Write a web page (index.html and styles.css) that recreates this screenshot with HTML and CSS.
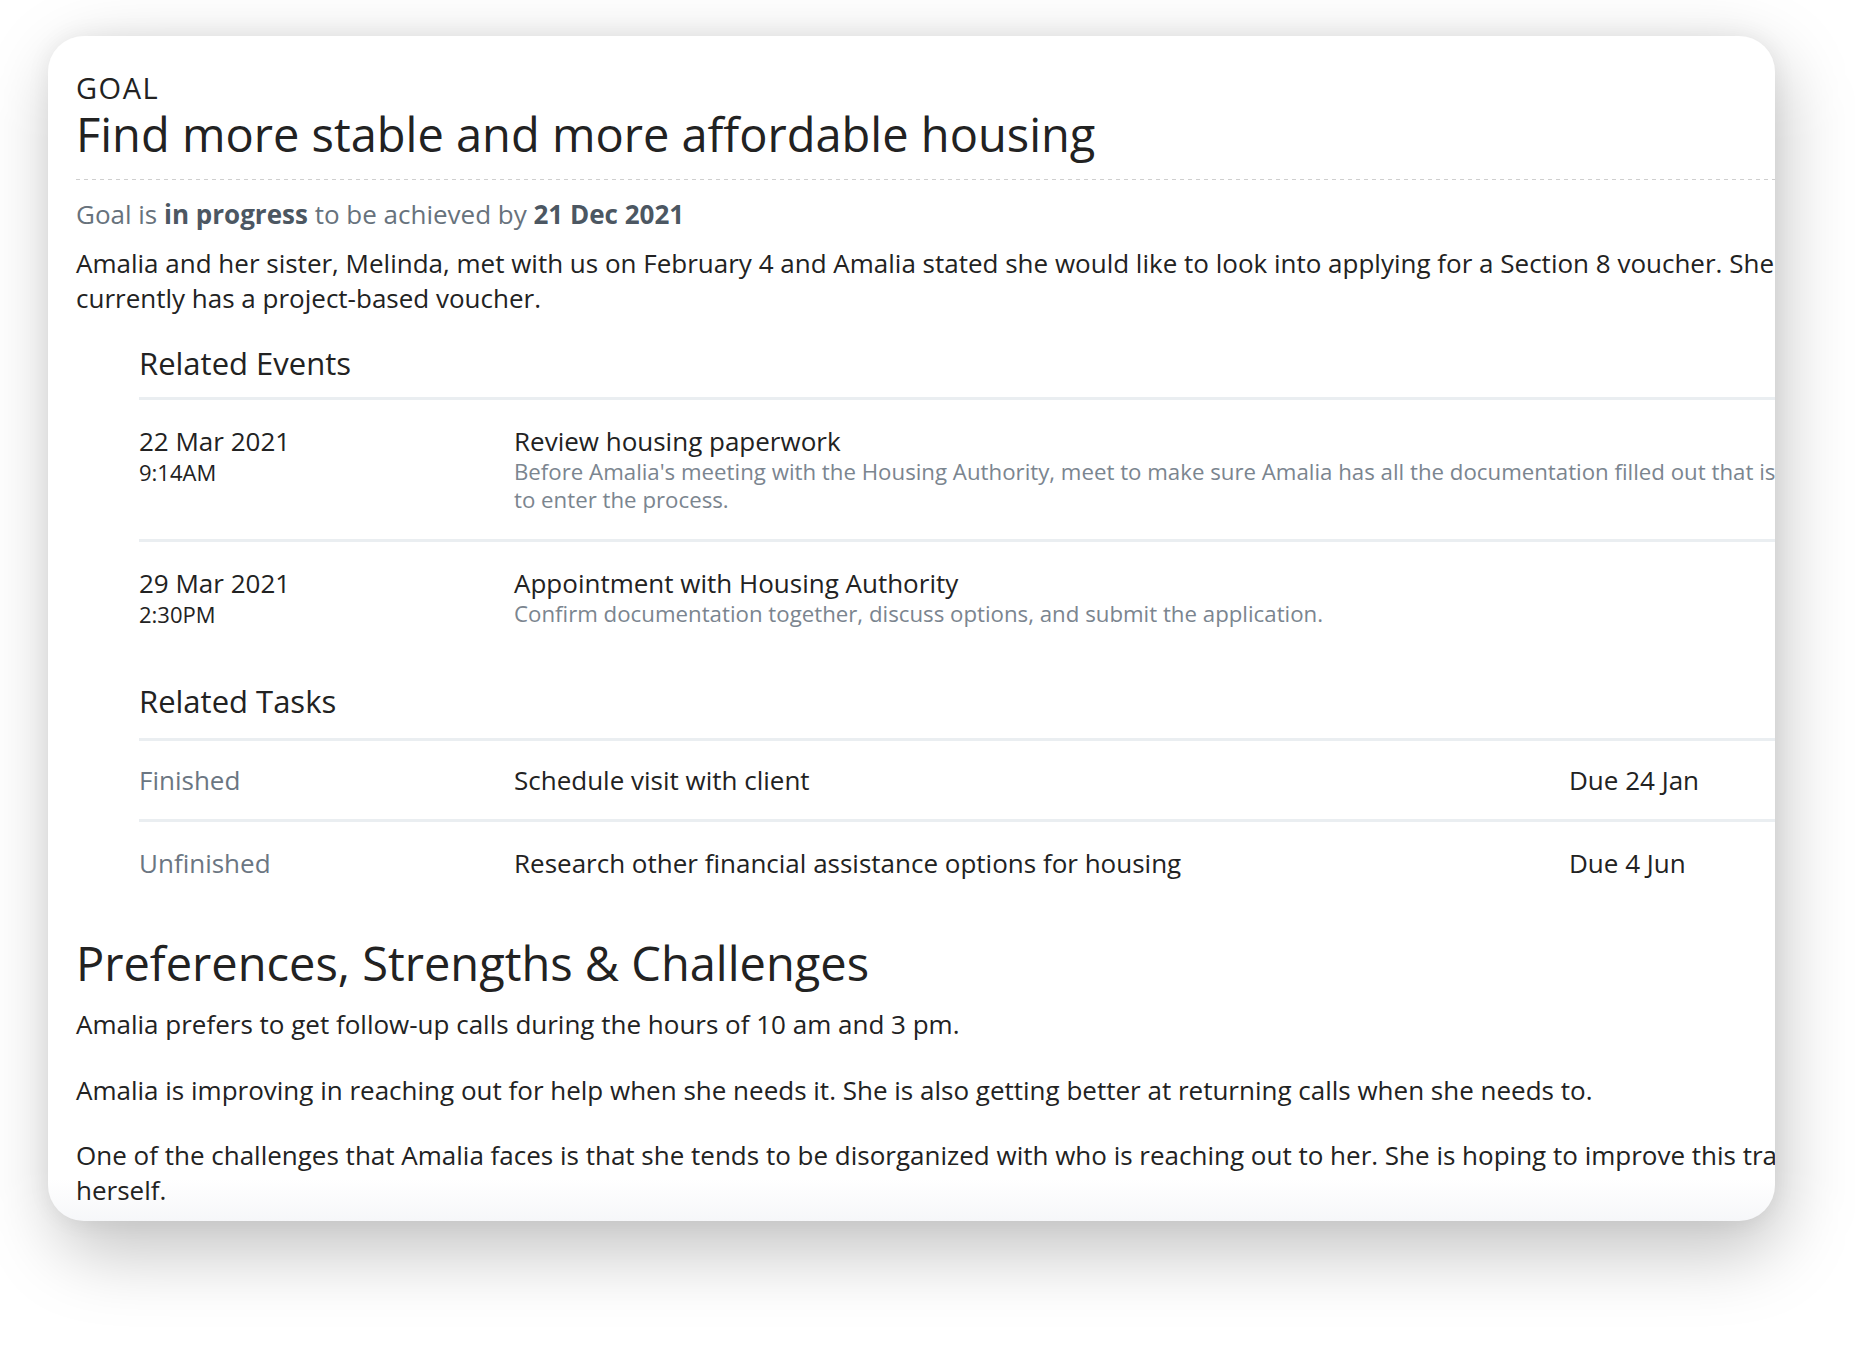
FILE: index.html
```html
<!DOCTYPE html>
<html lang="en">

<head>
    <meta charset="UTF-8">
    <title>Goal</title>
    <link rel="stylesheet" href="styles.css">
</head>

<body>
    <div class="stage">
        <div class="card">
            <div class="sheet">
                <div class="goal-label">GOAL</div>
                <h1 class="goal-title">Find more stable and more affordable housing</h1>
                <div class="rule"></div>
                <div class="goal-status">Goal is <b>in progress</b> to be achieved by <b>21 Dec 2021</b></div>
                <p class="goal-desc">Amalia and her sister, Melinda, met with us on February 4 and Amalia stated she would like to look into applying for a Section 8 voucher. She currently has a project-based voucher.</p>

                <div class="related">
                    <h2 class="related-title">Related Events</h2>
                    <div class="event-row">
                        <div class="when">
                            <div class="date">22 Mar 2021</div>
                            <div class="time">9:14AM</div>
                        </div>
                        <div class="what">
                            <div class="event-name">Review housing paperwork</div>
                            <div class="event-desc">Before Amalia's meeting with the Housing Authority, meet to make sure Amalia has all the documentation filled out that is needed<br>to enter the process.</div>
                        </div>
                    </div>
                    <div class="event-row">
                        <div class="when">
                            <div class="date">29 Mar 2021</div>
                            <div class="time">2:30PM</div>
                        </div>
                        <div class="what">
                            <div class="event-name">Appointment with Housing Authority</div>
                            <div class="event-desc">Confirm documentation together, discuss options, and submit the application.</div>
                        </div>
                    </div>
                </div>

                <div class="related related-tasks">
                    <h2 class="related-title">Related Tasks</h2>
                    <div class="task-row">
                        <div class="task-state">Finished</div>
                        <div class="task-name">Schedule visit with client</div>
                        <div class="task-due">Due 24 Jan</div>
                    </div>
                    <div class="task-row">
                        <div class="task-state">Unfinished</div>
                        <div class="task-name">Research other financial assistance options for housing</div>
                        <div class="task-due">Due 4 Jun</div>
                    </div>
                </div>

                <h2 class="section-title">Preferences, Strengths &amp; Challenges</h2>
                <p class="note">Amalia prefers to get follow-up calls during the hours of 10 am and 3 pm.</p>
                <p class="note">Amalia is improving in reaching out for help when she needs it. She is also getting better at returning calls when she needs to.</p>
                <p class="note">One of the challenges that Amalia faces is that she tends to be disorganized with who is reaching out to her. She is hoping to improve this trait for herself.</p>
            </div>
        </div>
    </div>
</body>

</html>
```

FILE: styles.css
```css
html,
body {
    min-height: 100vh;
}

body {
    font-family: "Open Sans", "Liberation Sans", sans-serif;
    margin: 0;
    padding: 36px 0 0 48px;
    box-sizing: border-box;
    background: white;
    color: #222;
}

/* holds the shadow, the card inside does the clipping */
.stage {
    position: relative;
    width: 1727px;
    height: 1185px;
    border-radius: 36px;
}

/* soft blurred shadow under the card */
.stage::before {
    content: "";
    position: absolute;
    top: 18px;
    left: 6px;
    right: -8px;
    bottom: -34px;
    border-radius: 50px;
    background: rgba(0, 0, 0, 0.22);
    filter: blur(34px);
}

.card {
    position: relative;
    height: 100%;
    border-radius: 36px;
    overflow: hidden;
    background: linear-gradient(to bottom, white calc(100% - 42px), #f6f7f9);
    box-shadow: 0 0 24px rgba(0, 0, 0, 0.06);
}

/* content is wider than the card, it gets cut at the right edge */
.sheet {
    width: 1810px;
    padding: 34px 0 0 28px;
}

.goal-label {
    font-size: 29px;
    line-height: 36px;
    letter-spacing: 1.5px;
}

.goal-title {
    font-size: 47px;
    font-weight: normal;
    line-height: 56px;
    margin: 0 0 17px;
}

.rule {
    height: 1px;
    background: repeating-linear-gradient(to right, #cfcfcf 0 4px, transparent 4px 8px);
}

.goal-status {
    margin-top: 17px;
    font-size: 26px;
    line-height: 34px;
    color: #67727c;
}

.goal-status b {
    color: #4c5762;
}

.goal-desc {
    margin: 15px 0 0;
    font-size: 26px;
    line-height: 34.5px;
}

.related {
    margin-left: 63px;
}

.related-title {
    font-size: 31px;
    font-weight: normal;
    line-height: 45px;
    margin: 26px 0 0;
    padding-bottom: 11px;
    border-bottom: 3px solid #eaeef1;
}

.related-tasks .related-title {
    padding-bottom: 14px;
}

.event-row {
    display: grid;
    grid-template-columns: 375px 1fr;
    padding: 24px 0 25px;
}

.event-row + .event-row {
    border-top: 3px solid #eaeef1;
}

.date,
.event-name {
    font-size: 26px;
    line-height: 34px;
}

.time {
    font-size: 22px;
    line-height: 28px;
}

.event-desc {
    font-size: 22.25px;
    line-height: 28px;
    white-space: nowrap;
    color: #7b858f;
}

.task-row {
    display: grid;
    grid-template-columns: 375px 1055px 1fr;
    padding: 21px 0;
    font-size: 26px;
    line-height: 36px;
}

.task-row + .task-row {
    border-top: 3px solid #eaeef1;
    padding-top: 23px;
}

.task-state {
    color: #6b7682;
}

.section-title {
    font-size: 47px;
    font-weight: normal;
    line-height: 50px;
    margin: 36px 0 19px;
}

.note {
    font-size: 26px;
    line-height: 34.5px;
    margin: 0 0 31px;
}
```
